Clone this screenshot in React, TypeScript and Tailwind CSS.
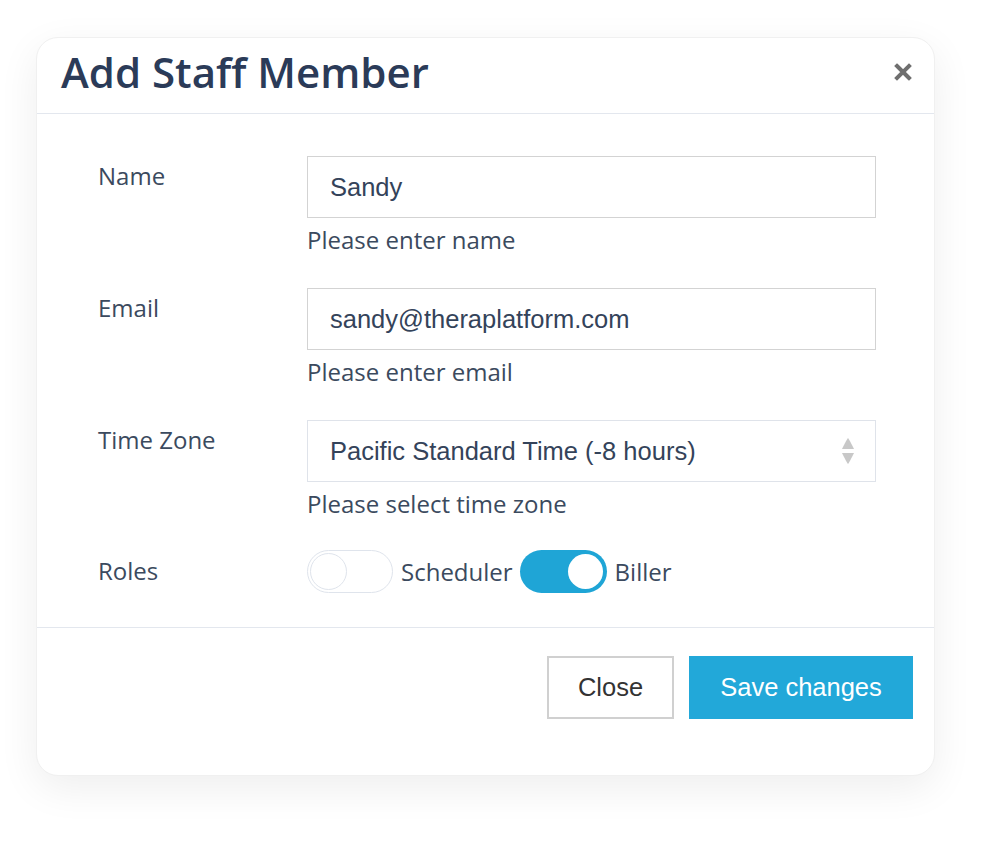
import React from 'react';

const sans = { fontFamily: '"Open Sans", "Noto Sans", sans-serif' };
const arial = { fontFamily: '"Liberation Sans", Arial, sans-serif' };

function Toggle({ on }: { on: boolean }) {
  return (
    <div
      className={
        on
          ? 'flex h-[43px] w-[87px] items-center justify-end rounded-full bg-[#1fa5d6] p-[4px]'
          : 'flex h-[43px] w-[86px] items-center justify-start rounded-full border border-[#dfe4ec] bg-white p-[2px]'
      }
    >
      <div
        className={
          on
            ? 'h-[35px] w-[35px] rounded-full bg-white'
            : 'h-[37px] w-[37px] rounded-full border border-[#dfe4ec] bg-white'
        }
      />
    </div>
  );
}

function Field({
  label,
  value,
  help,
  select,
}: {
  label: string;
  value: string;
  help: string;
  select?: boolean;
}) {
  return (
    <div className="flex">
      <div className="w-[209px] pt-[5px] text-[24px] leading-[30px] text-[#3b4a5e]" style={sans}>
        {label}
      </div>
      <div className="flex-1">
        <div
          className={
            select
              ? 'flex h-[62px] items-center justify-between border border-[#dfe3ea] bg-white pl-[22px] pr-[20px]'
              : 'flex h-[62px] items-center border border-[#d3d3d3] bg-white pl-[22px]'
          }
        >
          <span className="text-[25.5px] text-[#34435a]" style={arial}>
            {value}
          </span>
          {select && (
            <svg width="14" height="28" viewBox="0 0 14 28">
              <path d="M7 1 Q7.5 1 13 12 L1 12 Q6.5 1 7 1 Z" fill="#c8c8c8" />
              <path d="M7 27 Q7.5 27 13 16 L1 16 Q6.5 27 7 27 Z" fill="#c8c8c8" />
            </svg>
          )}
        </div>
        <div className="mt-[7px] text-[24px] leading-[30px] text-[#3b4a5e]" style={sans}>
          {help}
        </div>
      </div>
    </div>
  );
}

export default function App() {
  return (
    <div className="min-h-[847px] bg-white pl-[36px] pt-[37px]">
      <div className="flex h-[739px] w-[899px] flex-col rounded-[22px] border border-[#f0f0f0] bg-white shadow-[0_12px_40px_rgba(0,0,0,0.07)]">
        <div className="flex h-[76px] items-center justify-between border-b border-[#e3e7ee] pb-[8px] pl-[24px] pr-[22px]">
          <h1 className="text-[42px] font-semibold leading-none text-[#2b3b58]" style={sans}>
            Add Staff Member
          </h1>
          <svg width="18" height="18" viewBox="0 0 18 18">
            <path d="M3 3 L15 15 M15 3 L3 15" stroke="#6f6f6f" strokeWidth="4" strokeLinecap="square" />
          </svg>
        </div>

        <div className="flex flex-col gap-[33px] pl-[61px] pr-[58px] pt-[42px]">
          <Field label="Name" value="Sandy" help="Please enter name" />
          <Field label="Email" value="sandy@theraplatform.com" help="Please enter email" />
          <Field label="Time Zone" value="Pacific Standard Time (-8 hours)" help="Please select time zone" select />
          <div className="mt-[-2px] flex">
            <div className="w-[209px] pt-[6px] text-[24px] leading-[30px] text-[#3b4a5e]" style={sans}>
              Roles
            </div>
            <div className="flex items-center text-[24px] text-[#3b4a5e]" style={sans}>
              <Toggle on={false} />
              <span className="ml-[8px] mr-[7px]">Scheduler</span>
              <Toggle on />
              <span className="ml-[8px]">Biller</span>
            </div>
          </div>
        </div>

        <div className="mt-[34px] border-t border-[#e3e7ee]" />

        <div className="flex justify-end gap-[15px] pr-[21px] pt-[28px]">
          <button
            className="h-[63px] w-[127px] border-2 border-[#d0d0d0] bg-white text-[25.5px] text-[#333]"
            style={arial}
          >
            Close
          </button>
          <button className="h-[63px] w-[224px] bg-[#22a8d9] text-[25.5px] text-white" style={arial}>
            Save changes
          </button>
        </div>
      </div>
    </div>
  );
}
